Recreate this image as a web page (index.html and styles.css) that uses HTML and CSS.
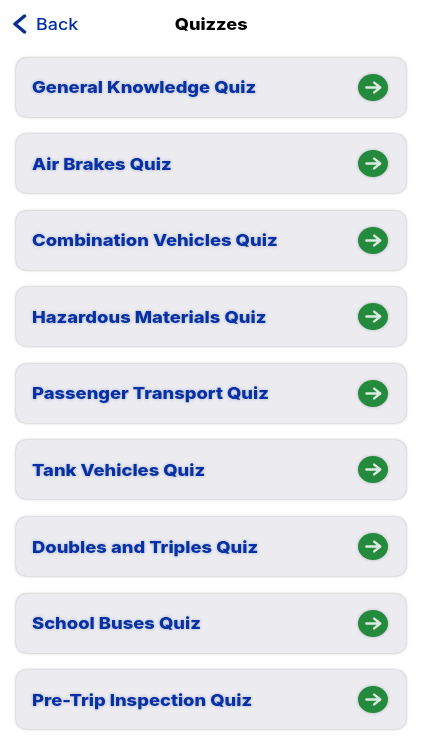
FILE: index.html
```
<!DOCTYPE html>
<html lang="en">
<head>
  <meta charset="UTF-8">
  <meta name="viewport" content="width=device-width, initial-scale=1.0">
  <title>Quizzes</title>
  <link rel="stylesheet" href="styles.css">
</head>
<body>
  <svg class="sprite" width="0" height="0">
    <symbol id="arrow" viewBox="0 0 30 27">
      <ellipse cx="15" cy="13.5" rx="15" ry="13.5" fill="#248a3d"/>
      <path d="M8.4 13.5H21.6M16.2 8.6L22.2 13.5L16.2 18.4" fill="none" stroke="#dcebe0" stroke-width="2.5" stroke-linecap="round" stroke-linejoin="round"/>
    </symbol>
  </svg>

  <header class="navbar">
    <a class="back" href="#">
      <svg class="chevron" viewBox="0 0 14 20"><path d="M11.5 2L2 10L11.5 18" fill="none" stroke="#062e8f" stroke-width="3.4" stroke-linecap="round" stroke-linejoin="round"/></svg>
      <span class="back-label">Back</span>
    </a>
    <h1 class="title">Quizzes</h1>
  </header>

  <main class="quiz-list">
    <a class="quiz" href="#"><span class="name">General Knowledge Quiz</span><svg class="go"><use href="#arrow"/></svg></a>
    <a class="quiz" href="#"><span class="name">Air Brakes Quiz</span><svg class="go"><use href="#arrow"/></svg></a>
    <a class="quiz" href="#"><span class="name">Combination Vehicles Quiz</span><svg class="go"><use href="#arrow"/></svg></a>
    <a class="quiz" href="#"><span class="name">Hazardous Materials Quiz</span><svg class="go"><use href="#arrow"/></svg></a>
    <a class="quiz" href="#"><span class="name">Passenger Transport Quiz</span><svg class="go"><use href="#arrow"/></svg></a>
    <a class="quiz" href="#"><span class="name">Tank Vehicles Quiz</span><svg class="go"><use href="#arrow"/></svg></a>
    <a class="quiz" href="#"><span class="name">Doubles and Triples Quiz</span><svg class="go"><use href="#arrow"/></svg></a>
    <a class="quiz" href="#"><span class="name">School Buses Quiz</span><svg class="go"><use href="#arrow"/></svg></a>
    <a class="quiz" href="#"><span class="name">Pre-Trip Inspection Quiz</span><svg class="go"><use href="#arrow"/></svg></a>
  </main>
</body>
</html>
```
FILE: styles.css
```
body {
  margin: 0;
  height: 750px;
  overflow: hidden;
  background-color: #fff;
  font-family: Inter, "Liberation Sans", sans-serif;
}

a {
  color: #0731a2;
  text-decoration: none;
}

.sprite {
  display: block;
}

.navbar {
  display: grid;
  grid-template-columns: 1fr auto 1fr;
  align-items: center;
  height: 47px;
  padding: 0 13px;
}

.back {
  display: flex;
  align-items: center;
  gap: 9px;
  font-size: 16px;
  font-weight: 500;
}

.back-label {
  transform: scaleX(1.12);
  transform-origin: left center;
}

.chevron {
  width: 14px;
  height: 20px;
}

.title {
  margin: 0;
  font-size: 16.5px;
  font-weight: 800;
  transform: scaleX(1.1);
}

.quiz-list {
  display: grid;
  grid-auto-rows: 59px;
  gap: 17.6px;
  padding: 10.5px 16px;
}

.quiz {
  display: flex;
  align-items: center;
  justify-content: space-between;
  padding: 0 18px 0 16px;
  border-radius: 10px;
  background-color: #ebebf0;
  box-shadow: 0 0 3px rgba(0, 0, 0, 0.35);
}

.name {
  font-size: 16.5px;
  font-weight: 800;
  text-shadow: 0 0 3px rgba(7, 49, 162, 0.35);
  transform: scaleX(1.115);
  transform-origin: left center;
}

.go {
  width: 30px;
  height: 27px;
  filter: drop-shadow(0 0 1.5px rgba(0, 0, 0, 0.25));
}
```
